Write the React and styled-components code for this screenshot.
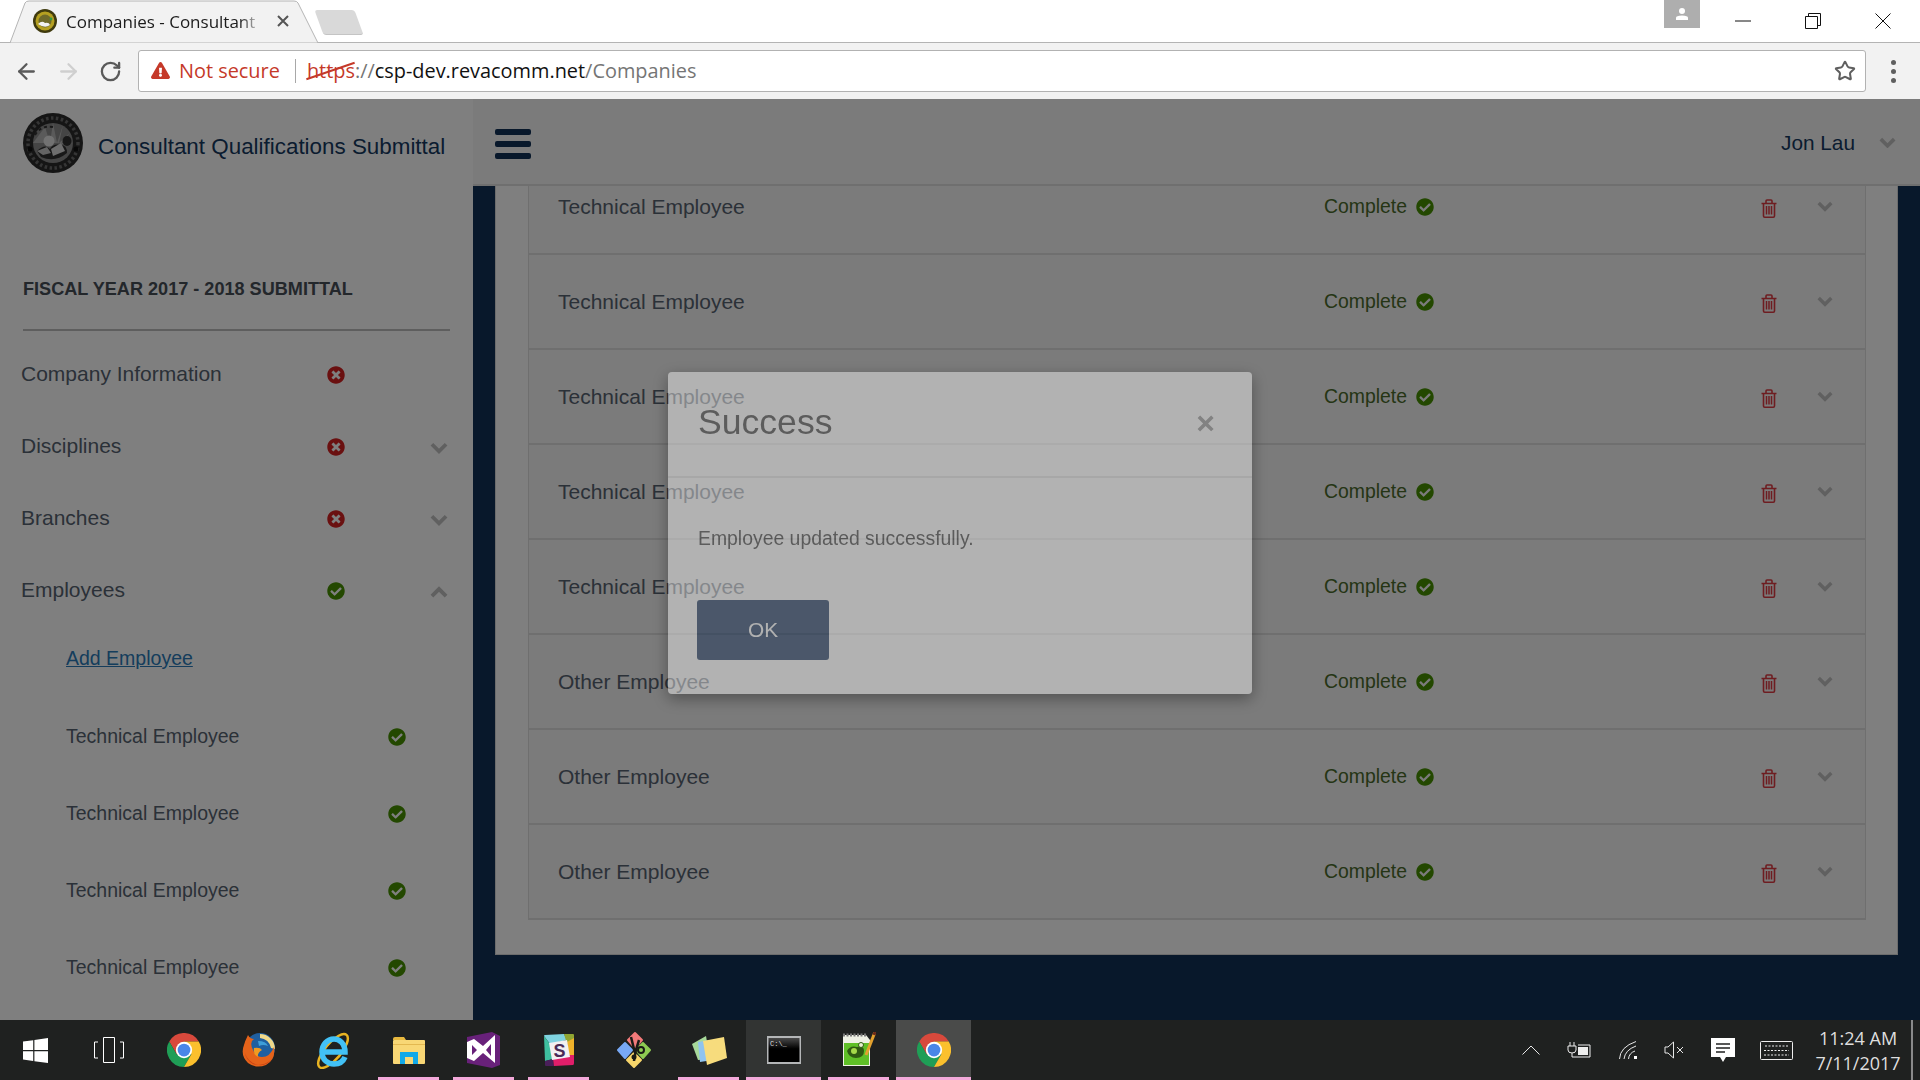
import React from "react";
import styled, { createGlobalStyle } from "styled-components";
import { ArrowLeft, ArrowRight, RotateCw, Star } from "lucide-react";
import { FaCheckCircle, FaTimesCircle, FaExclamationTriangle } from "react-icons/fa";

const GlobalStyle = createGlobalStyle`
  html, body {
    margin: 0;
    padding: 0;
    background: #fff;
    overflow: hidden;
  }
  * {
    box-sizing: border-box;
  }
`;

const sans = `"Liberation Sans", Arial, sans-serif`;
const ui = `"Open Sans", "Noto Sans", sans-serif`;

const Frame = styled.div`
  display: flex;
  flex-direction: column;
  width: 1920px;
  height: 1080px;
  overflow: hidden;
  font-family: ${sans};
`;

/* browser chrome */
const TabStrip = styled.div`
  display: flex;
  flex: none;
  align-items: flex-start;
  height: 43px;
  padding-left: 10px;
  background: #fff;
  border-bottom: 1px solid #b4b4b4;
`;

const Tab = styled.div`
  position: relative;
  display: flex;
  align-items: center;
  width: 308px;
  height: 43px;
  padding: 0 0 1px 23px;
  font-family: ${ui};
  font-size: 17px;
  color: #1c1c1c;
`;

const TabShape = styled.svg`
  position: absolute;
  top: 0;
  left: 0;
  z-index: 0;
`;

const Favicon = styled.svg`
  position: relative;
  flex: none;
  width: 24px;
  height: 24px;
  margin-right: 9px;
`;

const TabTitle = styled.span`
  position: relative;
  width: 193px;
  white-space: nowrap;
  mask-image: linear-gradient(to right, #000 90%, rgba(0, 0, 0, 0.15) 100%);
`;

const TabClose = styled.span`
  position: relative;
  display: flex;
  margin-left: 18px;
`;

const NewTab = styled.div`
  flex: none;
  width: 40px;
  height: 25px;
  margin: 10px 0 0 1px;
  background: #d9d9d9;
  border-bottom: 1px solid #c4c4c4;
  border-radius: 3px;
  transform: skewX(20deg);
`;

const ProfileBadge = styled.div`
  display: flex;
  flex: none;
  align-items: center;
  justify-content: center;
  width: 36px;
  height: 28px;
  margin-left: auto;
  background: #aeaeae;
`;

const WindowButton = styled.div`
  display: flex;
  flex: none;
  align-items: center;
  justify-content: center;
  width: 70px;
  height: 41px;
  &:first-of-type {
    margin-left: 8px;
  }
`;

const WindowButtons = styled.div`
  display: flex;
  padding-right: 2px;
`;

const Toolbar = styled.div`
  display: flex;
  flex: none;
  align-items: center;
  height: 56px;
  padding-left: 5px;
  background: #f2f2f2;
`;

const NavButton = styled.div`
  display: flex;
  flex: none;
  align-items: center;
  justify-content: center;
  width: 42px;
  height: 42px;
  color: ${(p) => p.$color};
`;

const AddressBar = styled.div`
  display: flex;
  flex: 1;
  align-items: center;
  height: 42px;
  margin-left: 7px;
  padding: 0 9px 1px 12px;
  background: #fff;
  border: 1px solid #b2b2b2;
  border-radius: 3px;
  font-family: ${ui};
  font-size: 19.9px;
  white-space: nowrap;
`;

const NotSecure = styled.span`
  margin-left: 9px;
  color: #c53929;
`;

const AddressDivider = styled.span`
  width: 1px;
  height: 24px;
  margin: 0 11px 0 15px;
  background: #a8a8a8;
`;

const Https = styled.span`
  position: relative;
  color: #c53929;
  &::after {
    content: "";
    position: absolute;
    top: 13px;
    left: -2px;
    width: 51px;
    height: 2px;
    background: #c53929;
    transform: rotate(-19deg);
  }
`;

const UrlPart = styled.span`
  color: ${(p) => (p.$host ? "#111" : "#757575")};
`;

const StarWrap = styled.span`
  display: flex;
  margin-left: auto;
  color: #5f5f5f;
`;

const MenuButton = styled.div`
  display: flex;
  flex: none;
  flex-direction: column;
  align-items: center;
  gap: 4px;
  width: 54px;
  span {
    width: 5px;
    height: 5px;
    border-radius: 50%;
    background: #5f5f5f;
  }
`;

/* page */
const Page = styled.div`
  position: relative;
  display: flex;
  flex: 1;
  min-height: 0;
`;

const Sidebar = styled.aside`
  flex: none;
  width: 473px;
  overflow: hidden;
  background: #fff;
`;

const Brand = styled.div`
  display: flex;
  align-items: center;
  gap: 15px;
  height: 88px;
  padding-left: 23px;
`;

const BrandTitle = styled.div`
  padding-top: 7px;
  font-size: 22.4px;
  color: #143860;
  white-space: nowrap;
`;

const SectionHeading = styled.div`
  width: 427px;
  margin: 92px 0 7px 23px;
  padding-bottom: 30px;
  border-bottom: 2px solid #bdbdbd;
  font-size: 18.1px;
  line-height: 20px;
  font-weight: 700;
  color: #474e57;
`;

const NavRow = styled.div`
  display: grid;
  grid-template-columns: 306px 18px 85px 18px;
  align-items: center;
  height: 72px;
  padding-left: 21px;
  font-size: 21px;
  color: #566270;
`;

const NavChevron = styled.span`
  display: flex;
  grid-column: 4;
  padding-top: 5px;
  color: #c0c0c0;
`;

const StatusIcon = styled.span`
  display: flex;
  padding-top: ${(p) => p.$drop ?? 2}px;
  color: ${(p) => (p.$ok ? "#469000" : "#d42020")};
`;

const AddLink = styled.a`
  display: flex;
  align-items: center;
  height: 64px;
  margin: 0 0 7px 66px;
  font-size: 19.5px;
  color: #2a7ab8;
  text-decoration: underline;
`;

const SubRow = styled.div`
  display: grid;
  grid-template-columns: 322px 18px;
  align-items: center;
  height: 77px;
  padding: 1px 0 0 66px;
  font-size: 19.5px;
  color: #566270;
`;

const Content = styled.div`
  display: flex;
  flex: 1;
  flex-direction: column;
  min-width: 0;
`;

const TopBar = styled.header`
  display: flex;
  flex: none;
  align-items: center;
  height: 87px;
  padding: 4px 24px 0 22px;
  background: #f6f6f6;
  border-bottom: 2px solid #dedede;
`;

const Hamburger = styled.div`
  display: flex;
  flex-direction: column;
  gap: 6px;
  width: 36px;
  span {
    height: 6px;
    border-radius: 2px;
    background: #103056;
  }
`;

const UserName = styled.div`
  margin-left: auto;
  padding-bottom: 2px;
  font-size: 20.8px;
  color: #143860;
`;

const UserChevron = styled.span`
  display: flex;
  margin: 0 0 2px 24px;
  color: #c0c0c0;
`;

const Main = styled.main`
  flex: 1;
  min-height: 0;
  padding: 0 22px;
  overflow: hidden;
  background: #103056;
`;

const Panel = styled.section`
  margin-top: -26px;
  padding: 0 31px 34px 32px;
  background: #fff;
  border: 1px solid #d8d8d8;
  border-top: 0;
`;

const List = styled.div`
  background: #f6f6f6;
  border-left: 1px solid #dedede;
  border-right: 1px solid #dedede;
`;

const Row = styled.div`
  display: grid;
  grid-template-columns: 766px 437px 56px 16px;
  align-items: center;
  height: 95px;
  padding-left: 29px;
  border-bottom: 2px solid #dedede;
  font-size: 21px;
  color: #566270;
`;

const Status = styled.div`
  display: flex;
  align-items: center;
  gap: 9px;
  font-size: 19.4px;
  color: #4a6a2a;
`;

const Trash = styled.span`
  display: flex;
  padding-top: 3px;
  color: #dc3a42;
`;

const RowChevron = styled.span`
  display: flex;
  color: #c0c0c0;
`;

/* success dialog */
const Backdrop = styled.div`
  position: absolute;
  inset: 0;
  display: flex;
  align-items: flex-start;
  justify-content: center;
  padding-top: 273px;
  background: rgba(0, 0, 0, 0.5);
`;

const Modal = styled.div`
  width: 584px;
  height: 322px;
  background: #fff;
  border-radius: 4px;
  box-shadow: 0 5px 15px rgba(0, 0, 0, 0.8);
  opacity: 0.42;
`;

const ModalHeader = styled.div`
  display: flex;
  align-items: center;
  justify-content: space-between;
  height: 106px;
  padding: 0 37px 4px 30px;
  border-bottom: 2px solid #e5e5e5;
`;

const ModalTitle = styled.div`
  font-size: 35.6px;
  color: #333;
`;

const ModalClose = styled.span`
  padding-top: 2px;
  font-size: 32px;
  font-weight: 700;
  line-height: 1;
  color: #8c8c8c;
`;

const ModalBody = styled.div`
  padding: 48px 30px 0 30px;
`;

const ModalText = styled.p`
  margin: 0 0 50px;
  font-size: 19.4px;
  line-height: 24px;
  color: #333;
`;

const OkButton = styled.button`
  display: block;
  width: 132px;
  height: 60px;
  margin-left: -1px;
  padding: 0;
  background: #0a2853;
  border: 0;
  border-radius: 3px;
  font-family: ${sans};
  font-size: 20.8px;
  color: #fff;
`;

/* taskbar */
const Taskbar = styled.footer`
  position: relative;
  display: flex;
  flex: none;
  align-items: stretch;
  height: 60px;
  background: #1f2120;
`;

const TaskButton = styled.div`
  display: flex;
  flex: none;
  align-items: center;
  justify-content: center;
  width: ${(p) => p.$w}px;
`;

const TaskItem = styled.div`
  position: relative;
  display: flex;
  flex: none;
  align-items: center;
  justify-content: center;
  width: 75px;
  background: ${(p) =>
    p.$active === "front" ? "#4a4b4a" : p.$active ? "#323433" : "transparent"};
  &::after {
    content: ${(p) => (p.$open ? '""' : "none")};
    position: absolute;
    bottom: 0;
    left: ${(p) => (p.$active ? 0 : "7px")};
    right: ${(p) => (p.$active ? 0 : "7px")};
    height: 3px;
    background: #f3a9da;
  }
`;

const Tray = styled.div`
  display: flex;
  align-items: stretch;
  margin-left: auto;
  padding-right: 7px;
`;

const TrayIcon = styled.div`
  display: flex;
  flex: none;
  align-items: center;
  justify-content: center;
  width: ${(p) => p.$w}px;
`;

const Clock = styled.div`
  display: flex;
  flex-direction: column;
  align-items: center;
  justify-content: center;
  gap: 3px;
  width: 112px;
  padding-left: 4px;
  border-right: 2px solid #8a8a8a;
  font-family: ${ui};
  font-size: 18px;
  line-height: 22px;
  color: #dedede;
  white-space: nowrap;
`;

/* drawings */
const ChromeLogo = () => (
  <svg width="34" height="34" viewBox="0 0 48 48">
    <path d="M3.2 12A24 24 0 0 1 44.8 12H24L13.6 30z" fill="#d8493c" />
    <path d="M3.2 12A24 24 0 0 0 24 48L34.4 30H13.6z" fill="#1f9e56" />
    <path d="M44.8 12A24 24 0 0 1 24 48L34.4 30 24 12z" fill="#fbc02d" />
    <circle cx="24" cy="24" r="11.5" fill="#fff" />
    <circle cx="24" cy="24" r="9" fill="#4a86e8" />
  </svg>
);

const FirefoxLogo = () => (
  <svg width="34" height="34" viewBox="0 0 34 34">
    <circle cx="18" cy="15" r="15" fill="#1f5fa0" />
    <path d="M18 1A15 15 0 0 1 33 16L29 15A12 12 0 0 0 18 5z" fill="#f0d98a" />
    <path d="M16 8Q24 8 26 13 21 11 17 13z" fill="#3f9ed8" />
    <path d="M6 2Q8 6 12 6 7 9 11 17 14 24 20 24 28 24 32 14 34 27 24 32 14 36 6 30 -2 22 2 12 3 8 6 2z" fill="#e5631a" />
    <path d="M12 15Q18 14 20 17 15 20 16 24 11 22 12 15z" fill="#f29a1f" />
    <path d="M3 20Q6 30 17 32 24 33 29 27 20 34 11 31 4 27 3 20z" fill="#c93f14" />
  </svg>
);

const IeLogo = () => (
  <svg width="36" height="38" viewBox="0 0 36 38">
    <ellipse cx="17" cy="20" rx="21" ry="8" fill="none" stroke="#e9b422" strokeWidth="2.5" transform="rotate(-50 17 20)" />
    <path d="M6 21H29C29 12 23 8 18 8 11 8 6 14 6 21 6 29 12 33 18 33 23 33 27 31 29 26" fill="none" stroke="#42c1f5" strokeWidth="5.5" />
  </svg>
);

const FolderLogo = () => (
  <svg width="32" height="28" viewBox="0 0 32 28">
    <path d="M0 3Q0 1 2 1H11L13 4H0z" fill="#e8b93f" />
    <rect y="4" width="32" height="24" rx="1" fill="#f8d775" />
    <rect y="8" width="32" height="1" fill="#e3b850" />
    <path d="M7 28V16H25V28H20V21H12V28z" fill="#11a9e8" />
  </svg>
);

const VsLogo = () => (
  <svg width="36" height="36" viewBox="0 0 36 36">
    <path d="M1 5L26 0 34 4V33L26 36 1 31z" fill="#68217a" />
    <path d="M1 10L8 7 17 14 29 3V31L17 21 8 29 1 26z" fill="#fff" />
    <path d="M6 13L11 18 6 23zM20 18L25 12V24z" fill="#68217a" />
  </svg>
);

const SlackLogo = () => (
  <svg width="32" height="32" viewBox="0 0 32 32">
    <path d="M1 2Q1 1 2 1L21 0 24 6 7 10z" fill="#7fd3e0" />
    <path d="M1 2L7 10 10 25 2 27z" fill="#3ebf9f" />
    <path d="M21 0H30Q31 0 31 1V5L24 10z" fill="#8fa532" />
    <path d="M24 8L31 4V21L26 23z" fill="#efb22a" />
    <path d="M2 27L10 25 11 32H3Q2 32 2 31z" fill="#4a1f5a" />
    <path d="M10 25L26 21 31 21V29Q31 31 30 31L11 32z" fill="#e01e6a" />
    <path d="M6 9L24 6 27 23 9 26z" fill="#f2f0f2" />
    <text x="16.5" y="23" textAnchor="middle" fontFamily="Liberation Sans" fontSize="18" fontWeight="700" fill="#4a2a56">S</text>
  </svg>
);

const GitLogo = () => (
  <svg width="36" height="38" viewBox="0 0 36 38" strokeLinejoin="round">
    <path d="M19 2L26 9 19 17 12 9z" fill="#f27a7a" stroke="#f27a7a" strokeWidth="2" />
    <path d="M9 12L16 19 9 27 2 19z" fill="#78a9f5" stroke="#78a9f5" strokeWidth="2" />
    <path d="M27 12L34 19 27 27 20 19z" fill="#8ecb52" stroke="#8ecb52" strokeWidth="2" />
    <path d="M18 22L25 29 18 36 11 29z" fill="#f7d66b" stroke="#f7d66b" strokeWidth="2" />
    <path d="M15 6L19 22M23 9Q19 20 18 30" stroke="#1a1a16" strokeWidth="2.5" fill="none" />
    <circle cx="25" cy="19" r="3" fill="none" stroke="#1a1a16" strokeWidth="2" />
    <circle cx="18" cy="26" r="2.5" fill="#1a1a16" />
  </svg>
);

const FilesLogo = () => (
  <svg width="36" height="30" viewBox="0 0 36 30">
    <path d="M1 9L15 1 19 24 7 25z" fill="#a7d99a" />
    <path d="M7 7L20 5 22 25 9 27z" fill="#8fc3ef" />
    <path d="M12 6L33 2 36 23 16 30z" fill="#f7dc7d" />
  </svg>
);

const CmdLogo = () => (
  <svg width="34" height="28" viewBox="0 0 34 28">
    <defs>
      <linearGradient id="cmdBody" x1="0" y1="0" x2="0" y2="1">
        <stop offset="0" stopColor="#4a4a4a" />
        <stop offset="0.45" stopColor="#000" />
      </linearGradient>
    </defs>
    <rect width="34" height="28" fill="#b4b6b8" />
    <rect x="1.5" y="2" width="31" height="24" fill="url(#cmdBody)" />
    <text x="3" y="10" fontFamily="Liberation Mono" fontSize="7" fill="#ddd">C:\_</text>
  </svg>
);

const NotepadLogo = () => (
  <svg width="34" height="36" viewBox="0 0 34 36">
    <path d="M1 3H24L28 8V34H1z" fill="#eef0e4" />
    <path d="M2 11H27V33H2z" fill="#5fbf27" />
    <path d="M5 19Q8 13 15 15 22 13 22 19 22 26 14 26 7 26 5 19z" fill="#2f5a12" />
    <circle cx="12" cy="19" r="3" fill="#a5d94a" />
    <circle cx="19" cy="13" r="2.5" fill="#e8f0d0" stroke="#2f5a12" />
    <path d="M1 3H24" stroke="#777" strokeWidth="3" strokeDasharray="2 1.5" />
    <path d="M33 0L24 23" stroke="#e3a12e" strokeWidth="3" />
    <path d="M33 0L32 3" stroke="#6b2a1a" strokeWidth="3" />
  </svg>
);

const SealFavicon = () => (
  <Favicon viewBox="0 0 24 24">
    <circle cx="12" cy="12" r="12" fill="#3f3a0e" />
    <circle cx="12" cy="12" r="9.5" fill="#b5a021" />
    <circle cx="12" cy="12" r="6.5" fill="#6f6a2a" />
    <path d="M5 15Q9 11 12 14 16 13 17 16 12 20 5 15z" fill="#f1f1f1" />
    <circle cx="18" cy="10" r="1.4" fill="#2f9a46" />
  </Favicon>
);

const SealLogo = () => (
  <svg width="60" height="60" viewBox="0 0 60 60">
    <circle cx="30" cy="30" r="30" fill="#2b2b2b" />
    <circle cx="30" cy="30" r="25" fill="none" stroke="#6a6a6a" strokeWidth="3.5" strokeDasharray="2.5 2.5" />
    <circle cx="30" cy="30" r="20" fill="#8a8a8a" />
    <path d="M30 10L34 30 40 12 36 30 47 20 38 31 50 30H10L22 14 27 30z" fill="#b5b5b5" />
    <path d="M12 22Q18 12 30 14" fill="none" stroke="#333" strokeWidth="2" strokeDasharray="3 3" />
    <circle cx="26" cy="28" r="5.5" fill="#e4e4e4" />
    <path d="M14 38Q22 30 27 36 30 30 38 32 44 32 44 40 32 50 18 44z" fill="#303030" />
    <path d="M14 38L24 34 28 40 20 42z" fill="#c9c9c9" />
    <path d="M28 36L38 30 42 38 30 43z" fill="#dcdcdc" />
    <ellipse cx="44" cy="28" rx="4.5" ry="5" fill="#2e2e2e" />
    <circle cx="7" cy="36" r="2.5" fill="#111" />
    <circle cx="53" cy="36" r="2.5" fill="#111" />
  </svg>
);

const Line = ({ d, w = 16, h = 16, color = "#111", width = 1 }) => (
  <svg width={w} height={h} viewBox={`0 0 ${w} ${h}`}>
    <path d={d} fill="none" stroke={color} strokeWidth={width} />
  </svg>
);

const Chevron = ({ up, w = 18 }) => (
  <svg width={w} height={(w * 11) / 16} viewBox="0 0 16 11">
    <path
      d={up ? "M1.7 9L8 2.7 14.3 9" : "M1.7 2L8 8.3 14.3 2"}
      fill="none"
      stroke="currentColor"
      strokeWidth="3.4"
    />
  </svg>
);

const TrashIcon = () => (
  <svg width="16" height="19" viewBox="0 0 16 19">
    <path
      d="M.5 4.5H15.5M2.5 4.5V17Q2.5 18.2 3.7 18.2H12.3Q13.5 18.2 13.5 17V4.5M5 4.5V2Q5 1 6 1H10Q11 1 11 2V4.5"
      fill="none"
      stroke="currentColor"
      strokeWidth="1.6"
    />
    <path d="M5.5 7V15.5M8 7V15.5M10.5 7V15.5" stroke="currentColor" strokeWidth="1.5" />
  </svg>
);

const Ok = ({ drop }) => (
  <StatusIcon $ok $drop={drop}>
    <FaCheckCircle size={18} />
  </StatusIcon>
);

const Bad = () => (
  <StatusIcon>
    <FaTimesCircle size={18} />
  </StatusIcon>
);

const employees = [
  "Technical Employee",
  "Technical Employee",
  "Technical Employee",
  "Technical Employee",
  "Technical Employee",
  "Other Employee",
  "Other Employee",
  "Other Employee",
];

const dockApps = [
  { icon: <ChromeLogo /> },
  { icon: <FirefoxLogo /> },
  { icon: <IeLogo /> },
  { icon: <FolderLogo />, open: true },
  { icon: <VsLogo />, open: true },
  { icon: <SlackLogo />, open: true },
  { icon: <GitLogo /> },
  { icon: <FilesLogo />, open: true },
  { icon: <CmdLogo />, open: true, active: "back" },
  { icon: <NotepadLogo />, open: true },
  { icon: <ChromeLogo />, open: true, active: "front" },
];

export default function App() {
  return (
    <Frame>
      <GlobalStyle />
      <TabStrip>
        <Tab>
          <TabShape width="308" height="43" viewBox="0 0 308 43">
            <path d="M0 43L15 3Q16 1 19 1H284Q287 1 288 3L308 43z" fill="#f2f2f2" stroke="#b4b4b4" />
          </TabShape>
          <SealFavicon />
          <TabTitle>Companies - Consultant</TabTitle>
          <TabClose>
            <Line w={12} h={12} d="M1 1L11 11M11 1L1 11" color="#555" width={2} />
          </TabClose>
        </Tab>
        <NewTab />
        <ProfileBadge>
          <svg width="14" height="14" viewBox="0 0 14 14">
            <circle cx="7" cy="4" r="3" fill="#fff" />
            <path d="M1 13V10.5Q1 9 7 8.5 13 9 13 10.5V13z" fill="#fff" />
          </svg>
        </ProfileBadge>
        <WindowButtons>
          <WindowButton>
            <Line w={16} h={2} d="M0 1H16" />
          </WindowButton>
          <WindowButton>
            <Line d="M3.5 3.5V.5H15.5V12.5H12.5M.5 3.5H12.5V15.5H.5z" />
          </WindowButton>
          <WindowButton>
            <Line d="M.5 .5L15.5 15.5M15.5 .5L.5 15.5" />
          </WindowButton>
        </WindowButtons>
      </TabStrip>

      <Toolbar>
        <NavButton $color="#5a5a5a">
          <ArrowLeft size={25} strokeWidth={2.2} />
        </NavButton>
        <NavButton $color="#cfcfcf">
          <ArrowRight size={25} strokeWidth={2.2} />
        </NavButton>
        <NavButton $color="#5a5a5a">
          <RotateCw size={23} strokeWidth={2.4} />
        </NavButton>
        <AddressBar>
          <FaExclamationTriangle size={19} color="#c53929" />
          <NotSecure>Not secure</NotSecure>
          <AddressDivider />
          <Https>https</Https>
          <UrlPart>://</UrlPart>
          <UrlPart $host>csp-dev.revacomm.net</UrlPart>
          <UrlPart>/Companies</UrlPart>
          <StarWrap>
            <Star size={22} strokeWidth={2.2} />
          </StarWrap>
        </AddressBar>
        <MenuButton>
          <span />
          <span />
          <span />
        </MenuButton>
      </Toolbar>

      <Page>
        <Sidebar>
          <Brand>
            <SealLogo />
            <BrandTitle>Consultant Qualifications Submittal</BrandTitle>
          </Brand>
          <SectionHeading>FISCAL YEAR 2017 - 2018 SUBMITTAL</SectionHeading>
          <NavRow>
            Company Information
            <Bad />
          </NavRow>
          <NavRow>
            Disciplines
            <Bad />
            <NavChevron>
              <Chevron />
            </NavChevron>
          </NavRow>
          <NavRow>
            Branches
            <Bad />
            <NavChevron>
              <Chevron />
            </NavChevron>
          </NavRow>
          <NavRow>
            Employees
            <Ok />
            <NavChevron>
              <Chevron up />
            </NavChevron>
          </NavRow>
          <AddLink>Add Employee</AddLink>
          {employees.slice(0, 4).map((name, i) => (
            <SubRow key={i}>
              {name}
              <Ok drop={1} />
            </SubRow>
          ))}
        </Sidebar>

        <Content>
          <TopBar>
            <Hamburger>
              <span />
              <span />
              <span />
            </Hamburger>
            <UserName>Jon Lau</UserName>
            <UserChevron>
              <Chevron w={17} />
            </UserChevron>
          </TopBar>
          <Main>
            <Panel>
              <List>
                {employees.map((name, i) => (
                  <Row key={i}>
                    {name}
                    <Status>
                      Complete
                      <Ok drop={0} />
                    </Status>
                    <Trash>
                      <TrashIcon />
                    </Trash>
                    <RowChevron>
                      <Chevron w={16} />
                    </RowChevron>
                  </Row>
                ))}
              </List>
            </Panel>
          </Main>
        </Content>

        <Backdrop>
          <Modal>
            <ModalHeader>
              <ModalTitle>Success</ModalTitle>
              <ModalClose>×</ModalClose>
            </ModalHeader>
            <ModalBody>
              <ModalText>Employee updated successfully.</ModalText>
              <OkButton>OK</OkButton>
            </ModalBody>
          </Modal>
        </Backdrop>
      </Page>

      <Taskbar>
        <TaskButton $w={71}>
          <svg width="25" height="25" viewBox="0 0 25 25">
            <path d="M0 3.6L10.2 2.2V12H0zM11.4 2L25 0V12H11.4zM0 13.2H10.2V23L0 21.5zM11.4 13.2H25V25L11.4 23.2z" fill="#fff" />
          </svg>
        </TaskButton>
        <TaskButton $w={75}>
          <Line w={30} h={26} color="#fff" d="M9.5 .5H20.5V25.5H9.5zM4 5H.5V21H4M26 5H29.5V21H26" />
        </TaskButton>
        {dockApps.map((app, i) => (
          <TaskItem key={i} $open={app.open} $active={app.active}>
            {app.icon}
          </TaskItem>
        ))}
        <Tray>
          <TrayIcon $w={48}>
            <Line w={18} h={10} color="#e8e8e8" d="M.5 9.5L9 1 17.5 9.5" />
          </TrayIcon>
          <TrayIcon $w={48}>
            <svg width="24" height="16" viewBox="0 0 24 16">
              <path d="M3 0V4M7 0V4M1 4H9V8Q9 11 5 11 1 11 1 8zM5 11V15H23V3H11" fill="none" stroke="#eee" />
              <rect x="11" y="5" width="10" height="8" fill="#eee" />
            </svg>
          </TrayIcon>
          <TrayIcon $w={50}>
            <svg width="18" height="18" viewBox="0 0 18 18">
              <path d="M.5 18Q1 6 17 .5M5 18Q6 9 17 5M9.5 18Q10 12 16 10" fill="none" stroke="#e8e8e8" />
              <rect x="15" y="15" width="3" height="3" fill="#fff" />
            </svg>
          </TrayIcon>
          <TrayIcon $w={42}>
            <Line w={20} h={18} color="#e8e8e8" d="M1 6H4L9.5 1V17L4 12H1zM13 6L19 12M19 6L13 12" />
          </TrayIcon>
          <TrayIcon $w={56}>
            <svg width="24" height="24" viewBox="0 0 24 24">
              <path d="M0 0H24V19H15L12 24 9 19H0z" fill="#fff" />
              <path d="M5 6H19M5 10H19M5 14H14" stroke="#1f2120" strokeWidth="1.3" />
            </svg>
          </TrayIcon>
          <TrayIcon $w={50}>
            <svg width="33" height="19" viewBox="0 0 33 19">
              <rect x=".5" y=".5" width="32" height="18" rx="1" fill="none" stroke="#eee" />
              <path d="M5 5H28M4 9.5H29M4 14H29" stroke="#eee" strokeDasharray="2 1.5" />
            </svg>
          </TrayIcon>
          <Clock>
            <span>11:24 AM</span>
            <span>7/11/2017</span>
          </Clock>
        </Tray>
      </Taskbar>
    </Frame>
  );
}
